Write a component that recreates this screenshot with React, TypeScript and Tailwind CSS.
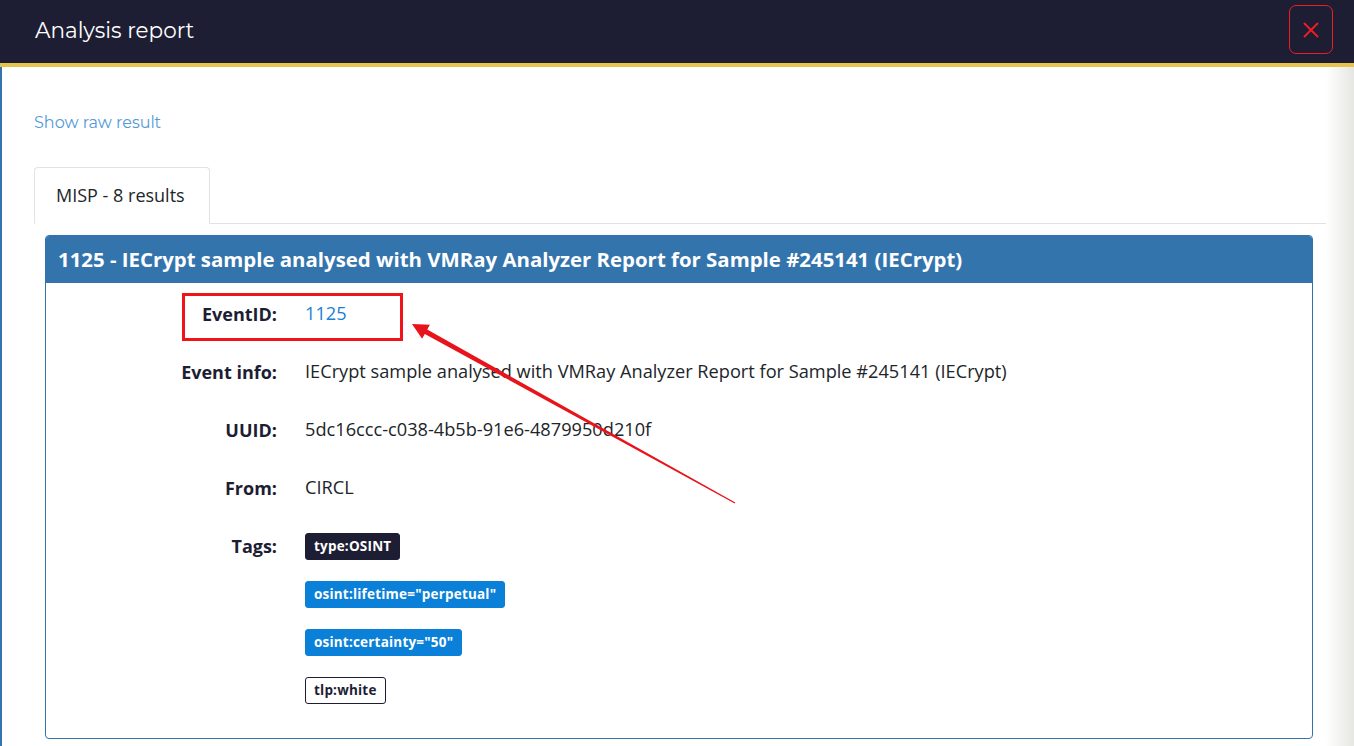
import { X } from "lucide-react";

const head = "font-['Montserrat','DejaVu_Sans','Noto_Sans',sans-serif]";
const body = "font-['Segoe_UI','Open_Sans','Noto_Sans',sans-serif]";

const rows: { label: string; value: string; link?: boolean }[] = [
  { label: "EventID:", value: "1125", link: true },
  { label: "Event info:", value: "IECrypt sample analysed with VMRay Analyzer Report for Sample #245141 (IECrypt)" },
  { label: "UUID:", value: "5dc16ccc-c038-4b5b-91e6-4879950d210f" },
  { label: "From:", value: "CIRCL" },
];

const tags = [
  { text: "type:OSINT", cls: "bg-[#1d1e33] text-white border-[#1d1e33]" },
  { text: 'osint:lifetime="perpetual"', cls: "bg-[#0b80d8] text-white border-[#0b80d8]" },
  { text: 'osint:certainty="50"', cls: "bg-[#0b80d8] text-white border-[#0b80d8]" },
  { text: "tlp:white", cls: "bg-white text-[#1d1e33] border-[#1d1e33]" },
];

export default function App() {
  return (
    <div className="relative flex h-[746px] w-[1354px] flex-col overflow-hidden bg-white">
      {/* modal header */}
      <div className="flex h-[67px] shrink-0 items-start justify-between border-b-4 border-[#e4c44c] bg-[#1d1e33] pl-[35px] pr-[21px]">
        <h2 className={`${head} mt-[14px] text-[21.5px] text-white`}>Analysis report</h2>
        <button
          type="button"
          className="mt-[5px] flex h-[49px] w-[44px] items-center justify-center rounded-[7px] border border-[#ee1c25]"
        >
          <X className="h-[26px] w-[26px] text-[#ee1c25]" strokeWidth={1.8} />
        </button>
      </div>

      <div className="flex flex-1">
        <div className="flex-1 border-l-2 border-[#3474ad] pl-[32px]">
          <a className={`${head} mt-[44px] block text-[16px] text-[#5499d8]`}>Show raw result</a>

          {/* tabs */}
          <div className="mt-[32px] flex border-b border-[#e2e2e2]">
            <div
              className={`${body} -mb-px flex h-[57px] w-[176px] items-center rounded-t-[4px] border border-b-white border-[#e2e2e2] pl-[21px] text-[18px] text-[#212529]`}
            >
              MISP - 8 results
            </div>
          </div>

          {/* result card */}
          <div className={`${body} ml-[11px] mr-[13px] mt-[11px] overflow-hidden rounded-[4px] border border-[#3474ad]`}>
            <div className="flex h-[47px] items-center bg-[#3474ad] pl-[12px] text-[20.4px] font-bold text-white">
              1125 - IECrypt sample analysed with VMRay Analyzer Report for Sample #245141 (IECrypt)
            </div>
            <div className="pt-[2px] pb-[34px]">
              {rows.map((r) => (
                <div key={r.label} className="flex h-[58px] items-center gap-[28px]">
                  <span className="w-[231px] text-right text-[18px] font-bold text-[#1d1e33]">{r.label}</span>
                  <span className={`text-[18.2px] ${r.link ? "text-[#1b80d6]" : "text-[#212529]"}`}>{r.value}</span>
                </div>
              ))}
              <div className="flex gap-[28px] pt-[16px]">
                <span className="flex h-[27px] w-[231px] items-center justify-end text-[18px] font-bold text-[#1d1e33]">
                  Tags:
                </span>
                <div className="flex flex-col items-start gap-[21px]">
                  {tags.map((t) => (
                    <span
                      key={t.text}
                      className={`flex h-[27px] items-center rounded-[3px] border px-[8px] text-[13.5px] font-bold tracking-[0.2px] ${t.cls}`}
                    >
                      {t.text}
                    </span>
                  ))}
                </div>
              </div>
            </div>
          </div>
        </div>
        {/* page scroll shadow */}
        <div className="w-[28px] bg-gradient-to-r from-white to-[#e6e6e2]" />
      </div>

      {/* annotation: red box + arrow */}
      <div className="pointer-events-none absolute left-[182px] top-[293px] h-[48px] w-[221px] border-[3px] border-[#ee1419]" />
      <svg className="pointer-events-none absolute left-0 top-0" width="1354" height="746">
        <polygon
          points="412,324 429.9,324.8 427.2,329.6 735.3,502.5 734.7,503.5 424.8,334 422.1,338.8"
          fill="#e8141c"
        />
      </svg>
    </div>
  );
}
